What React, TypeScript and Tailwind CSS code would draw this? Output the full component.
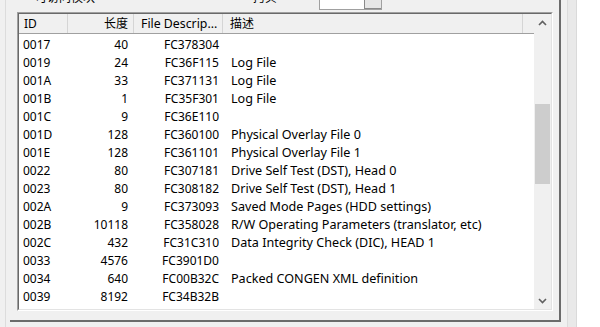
import React from 'react';

const rows: [string, string, string, string][] = [
  ['0017', '40', 'FC378304', ''],
  ['0019', '24', 'FC36F115', 'Log File'],
  ['001A', '33', 'FC371131', 'Log File'],
  ['001B', '1', 'FC35F301', 'Log File'],
  ['001C', '9', 'FC36E110', ''],
  ['001D', '128', 'FC360100', 'Physical Overlay File 0'],
  ['001E', '128', 'FC361101', 'Physical Overlay File 1'],
  ['0022', '80', 'FC307181', 'Drive Self Test (DST), Head 0'],
  ['0023', '80', 'FC308182', 'Drive Self Test (DST), Head 1'],
  ['002A', '9', 'FC373093', 'Saved Mode Pages (HDD settings)'],
  ['002B', '10118', 'FC358028', 'R/W Operating Parameters (translator, etc)'],
  ['002C', '432', 'FC31C310', 'Data Integrity Check (DIC), HEAD 1'],
  ['0033', '4576', 'FC3901D0', ''],
  ['0034', '640', 'FC00B32C', 'Packed CONGEN XML definition'],
  ['0039', '8192', 'FC34B32B', ''],
];

function Chevron({ up }: { up?: boolean }) {
  return (
    <svg width="9" height="6" viewBox="0 0 9 6">
      <path
        d={up ? 'M1 5 L4.5 1.5 L8 5' : 'M1 1 L4.5 4.5 L8 1'}
        fill="none"
        stroke="#606060"
        strokeWidth="1.6"
      />
    </svg>
  );
}

export default function App() {
  return (
    <div
      className="w-[600px] h-[327px] bg-white flex overflow-hidden text-[12px] text-black"
      style={{ fontFamily: '"Noto Sans", "Noto Sans CJK SC", sans-serif' }}
    >
      <div className="w-[577px] h-full bg-[#f0f0f0] flex border-r border-[#dadada]">
        <div className="w-[6px] h-full border-r border-[#dcdcdc]" />
        <div className="w-[555px] h-[322px] flex flex-col border-r-2 border-[#6b6b6b]">
          {/* top strip, cut off by the window edge */}
          <div className="h-[12px] flex items-start overflow-hidden">
            <div className="ml-[29px] mt-[-8px] leading-[12px] w-[218px]">可访问模块</div>
            <div className="mt-[-8px] leading-[12px] w-[66px]">拷贝</div>
            <div className="mt-[-2px] h-[12px] w-[63px] bg-white border border-[#a0a0a0] border-t-0 flex justify-end">
              <div className="w-[17px] h-full bg-[#e6e6e6] border-l border-b border-[#8a8a8a]" />
            </div>
          </div>

          {/* list box */}
          <div className="ml-[11px] w-[536px] h-[299px] border-t border-l border-[#a0a0a0] border-r border-b border-r-white border-b-white">
            <div className="w-full h-full border-t border-l border-[#696969] border-r border-b border-r-[#e3e3e3] border-b-[#e3e3e3] bg-white flex">
              <div className="flex-1 flex flex-col">
                <div className="h-[20px] flex bg-[#f0f0f0] border-b border-[#a0a0a0] leading-[19px]">
                  <div className="w-[49px] pl-[5px] border-r border-[#d5d5d5]">ID</div>
                  <div className="w-[66px] pr-[5px] text-right border-r border-[#d5d5d5]">长度</div>
                  <div className="w-[89px] pl-[7px] border-r border-[#d5d5d5] whitespace-nowrap overflow-hidden text-[12.3px]">File Descrip...</div>
                  <div className="w-[300px] pl-[7px] border-r border-[#d5d5d5]">描述</div>
                  <div className="flex-1" />
                </div>
                <div className="pt-[2px] flex flex-col">
                  {rows.map(([id, len, fd, desc]) => (
                    <div key={id} className="h-[18px] flex leading-[18px] whitespace-nowrap">
                      <div className="w-[49px] pl-[4px]">{id}</div>
                      <div className="w-[66px] pr-[6px] text-right">{len}</div>
                      <div className="w-[89px] pr-[4px] text-right">{fd}</div>
                      <div className="pl-[8px] text-[12.6px]">{desc}</div>
                    </div>
                  ))}
                </div>
              </div>
              <div className="w-[17px] h-full bg-[#f0f0f0] flex flex-col items-center">
                <div className="h-[17px] flex items-center justify-center">
                  <Chevron up />
                </div>
                <div className="h-[73px]" />
                <div className="w-[15px] h-[80px] bg-[#cdcdcd]" />
                <div className="flex-1" />
                <div className="h-[17px] flex items-center justify-center">
                  <Chevron />
                </div>
              </div>
            </div>
          </div>

          <div className="flex-1" />
          <div className="ml-[4px] h-[2px] bg-[#6b6b6b]" />
        </div>
        <div className="w-[7px] h-full border-r border-[#dcdcdc]" />
        <div className="w-[8px] h-full bg-[#e9e9e9]" />
      </div>
    </div>
  );
}
